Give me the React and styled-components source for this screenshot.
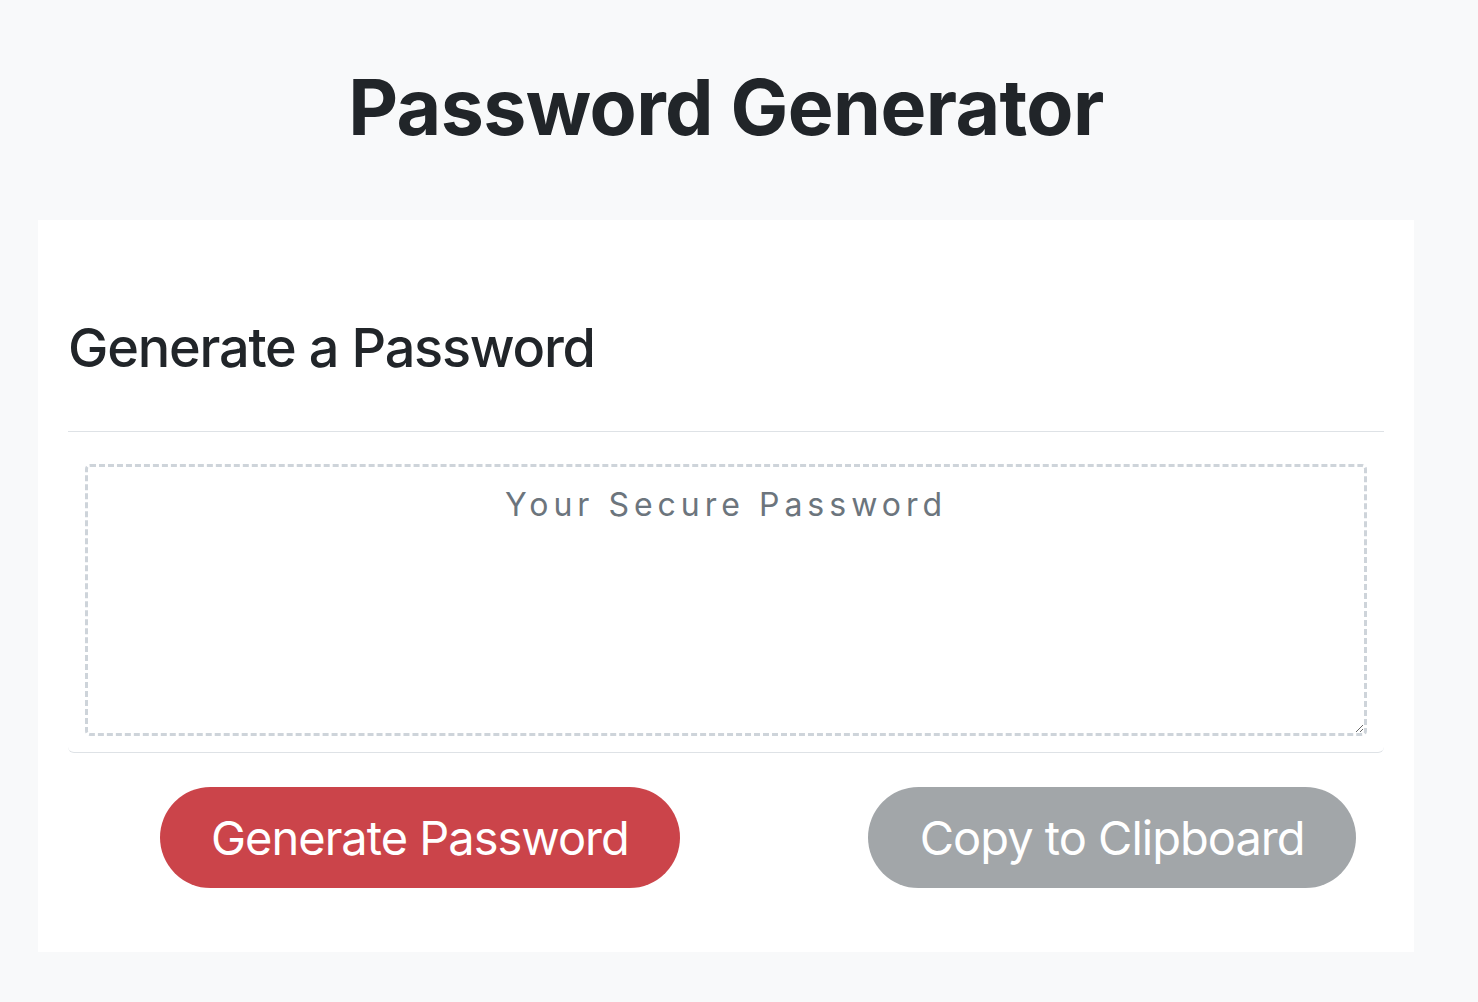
import React from "react";
import styled, { createGlobalStyle } from "styled-components";

const GlobalStyle = createGlobalStyle`
    html, body {
        margin: 0;
        padding: 0;
        background: #f8f9fa;
        font-family: Inter, "Noto Sans", "Liberation Sans", sans-serif;
        color: #212529;
    }
`;

const Page = styled.div`
    padding: 0 64px 50px 38px;
`;

const Title = styled.h1`
    margin: 0;
    padding: 69px 0 0;
    height: 220px;
    box-sizing: border-box;
    text-align: center;
    font-size: 77px;
    font-weight: 700;
    line-height: 1;
    letter-spacing: -0.6px;
`;

const Card = styled.div`
    background: #fff;
    padding: 0 30px 64px;
`;

const InnerCard = styled.div`
    border-bottom: 1px solid #dee2e6;
    border-radius: 0 0 6px 6px;
`;

const CardHeader = styled.div`
    padding: 101px 0 56px;
    border-bottom: 1px solid #dee2e6;

    h2 {
        margin: 0;
        font-size: 54px;
        font-weight: 500;
        line-height: 1;
        letter-spacing: -1.2px;
    }
`;

const CardBody = styled.div`
    padding: 32px 17px 16px;
`;

const PasswordBox = styled.textarea`
    display: block;
    width: 100%;
    height: 272px;
    box-sizing: border-box;
    border: 3px dashed #ced4da;
    border-radius: 5px;
    padding: 18px 10px;
    resize: vertical;
    text-align: center;
    font-family: inherit;
    font-size: 32px;
    letter-spacing: 5px;
    color: #212529;
    outline: none;

    &::placeholder {
        color: #6c757d;
    }
`;

const ButtonRow = styled.div`
    display: flex;
    gap: 188px;
    padding: 34px 0 0 92px;
`;

const PillButton = styled.button`
    height: 101px;
    padding: 0 ${(p) => p.$pad}px;
    border: none;
    border-radius: 51px;
    background: ${(p) => p.color};
    color: #fff;
    font-family: inherit;
    font-size: 47px;
    font-weight: 400;
    letter-spacing: -1px;
    white-space: nowrap;
    cursor: pointer;
`;

export default function App() {
    return (
        <>
            <GlobalStyle />
            <Page>
                <Title>Password Generator</Title>
                <Card>
                    <InnerCard>
                        <CardHeader>
                            <h2>Generate a Password</h2>
                        </CardHeader>
                        <CardBody>
                            <PasswordBox readOnly placeholder="Your Secure Password" />
                        </CardBody>
                    </InnerCard>
                    <ButtonRow>
                        <PillButton color="#cb444a" $pad={51}>Generate Password</PillButton>
                        <PillButton color="#a2a6a9" $pad={52}>Copy to Clipboard</PillButton>
                    </ButtonRow>
                </Card>
            </Page>
        </>
    );
}
